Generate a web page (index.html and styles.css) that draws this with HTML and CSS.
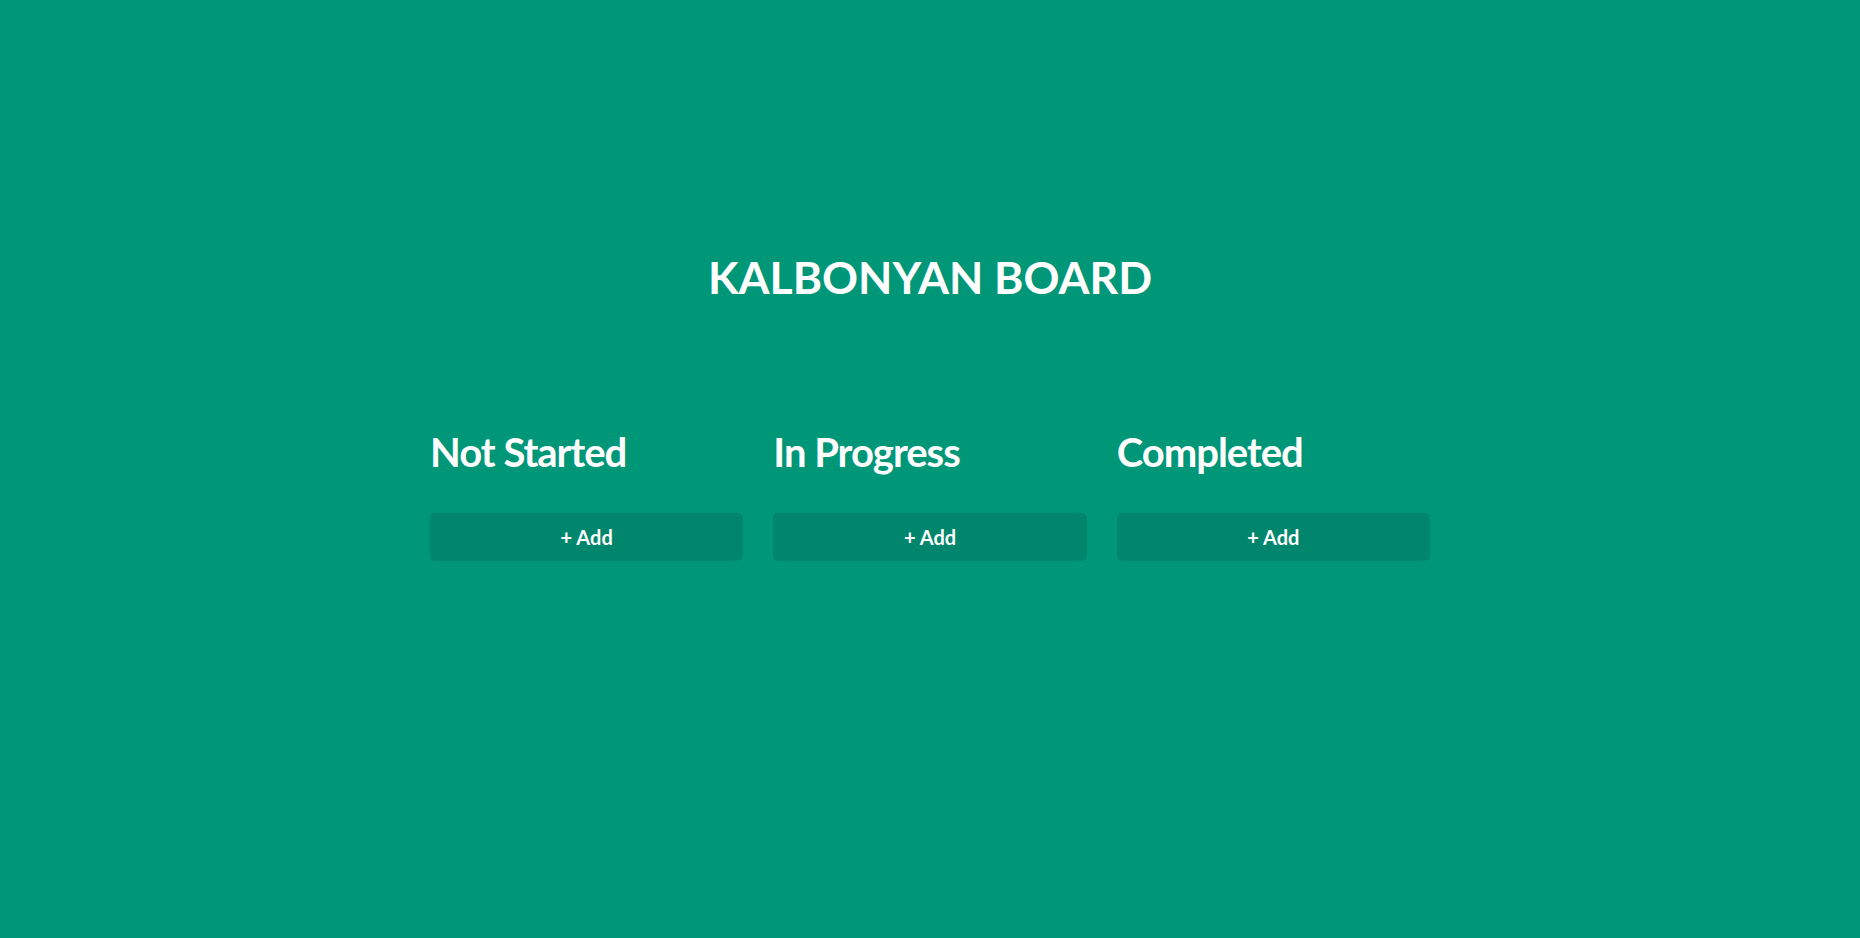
FILE: index.html
```html
<!DOCTYPE html>
<html lang="en">
<head>
<meta charset="utf-8">
<title>Kalbonyan Board</title>
<link rel="stylesheet" href="styles.css">
</head>
<body>
<main class="page">
  <h1 class="title">KALBONYAN BOARD</h1>
  <section class="board">
    <div class="column">
      <h2 class="column-title">Not Started</h2>
      <button class="add-btn">+ Add</button>
    </div>
    <div class="column">
      <h2 class="column-title">In Progress</h2>
      <button class="add-btn">+ Add</button>
    </div>
    <div class="column">
      <h2 class="column-title">Completed</h2>
      <button class="add-btn">+ Add</button>
    </div>
  </section>
</main>
</body>
</html>
```
FILE: styles.css
```css
html, body {
  margin: 0;
  padding: 0;
  height: 100%;
}
body {
  background: #009678;
  color: #ffffff;
  font-family: Lato, "Open Sans", sans-serif;
}
.page {
  display: flex;
  flex-direction: column;
  align-items: center;
  padding-top: 250px;
}
.title {
  margin: 0;
  font-size: 44.6px;
  font-weight: 700;
  line-height: 53px;
}
.board {
  margin-top: 125px;
  width: 1000px;
  display: grid;
  grid-template-columns: repeat(3, 1fr);
  gap: 30px;
}
.column {
  display: flex;
  flex-direction: column;
}
.column-title {
  margin: 0;
  font-size: 40px;
  font-weight: 700;
  line-height: 48px;
  letter-spacing: -1px;
}
.add-btn {
  margin-top: 37px;
  border: none;
  border-radius: 5px;
  background: #00866c;
  color: #ffffff;
  font-family: Lato, "Open Sans", sans-serif;
  font-size: 20px;
  font-weight: 700;
  line-height: 24px;
  padding: 12px 0;
  cursor: pointer;
}
```
